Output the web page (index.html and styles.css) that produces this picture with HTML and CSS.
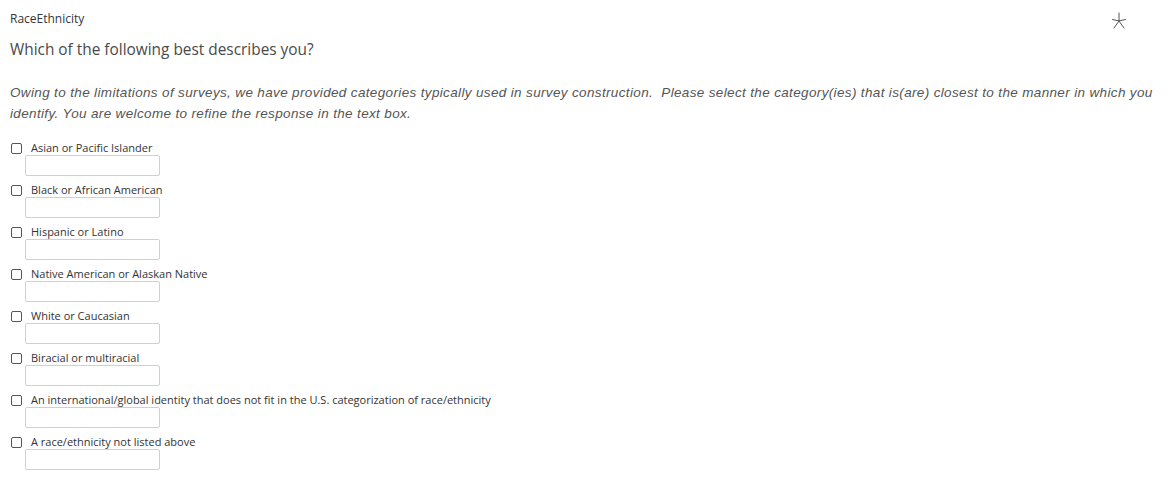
FILE: index.html
```html
<!DOCTYPE html>
<html>
<head>
<meta charset="utf-8">
<link rel="stylesheet" href="styles.css">
</head>
<body>
<div class="page">
  <div class="head">
    <div class="qname">RaceEthnicity</div>
    <svg class="req" width="16" height="18" viewBox="0 0 16 18"><g stroke="#555" stroke-width="1" fill="none" stroke-linecap="round"><line x1="8" y1="1" x2="8" y2="9"/><line x1="8" y1="9" x2="1.5" y2="7.5"/><line x1="8" y1="9" x2="14.5" y2="7.5"/><line x1="8" y1="9" x2="3" y2="16"/><line x1="8" y1="9" x2="13" y2="16"/></g></svg>
  </div>
  <div class="question">Which of the following best describes you?</div>
  <p class="intro">Owing to the limitations of surveys, we have provided categories typically used in survey construction.&nbsp; Please select the category(ies) that is(are) closest to the manner in which you identify. You are welcome to refine the response in the text box.</p>
  <div class="options">
    <div class="opt"><label class="row"><span class="box"></span><span class="lbl">Asian or Pacific Islander</span></label><span class="field"></span></div>
    <div class="opt"><label class="row"><span class="box"></span><span class="lbl">Black or African American</span></label><span class="field"></span></div>
    <div class="opt"><label class="row"><span class="box"></span><span class="lbl">Hispanic or Latino</span></label><span class="field"></span></div>
    <div class="opt"><label class="row"><span class="box"></span><span class="lbl">Native American or Alaskan Native</span></label><span class="field"></span></div>
    <div class="opt"><label class="row"><span class="box"></span><span class="lbl">White or Caucasian</span></label><span class="field"></span></div>
    <div class="opt"><label class="row"><span class="box"></span><span class="lbl">Biracial or multiracial</span></label><span class="field"></span></div>
    <div class="opt"><label class="row"><span class="box"></span><span class="lbl">An international/global identity that does not fit in the U.S. categorization of race/ethnicity</span></label><span class="field"></span></div>
    <div class="opt"><label class="row"><span class="box"></span><span class="lbl">A race/ethnicity not listed above</span></label><span class="field"></span></div>
  </div>
</div>
</body>
</html>
```
FILE: styles.css
```css
* { box-sizing: border-box; }
html, body { margin: 0; padding: 0; background: #fff; }
body { font-family: "Open Sans", "Noto Sans", sans-serif; color: #32363a; }
.page { padding: 10px 10px 0 10px; }
.head { display: flex; justify-content: space-between; align-items: flex-start; height: 24px; }
.qname { font-size: 12px; line-height: 18px; color: #32363a; }
.req { margin: 2px 37px 0 0; }
.question { font-size: 15.4px; line-height: 20px; color: #4a4a4a; margin-top: 6px; }
.intro { font-family: "Liberation Sans", Arial, sans-serif; font-style: italic; font-size: 13.5px; letter-spacing: 0.35px; line-height: 21px; color: #555; margin: 22px 0 0 0; }
.options { margin-top: 17px; display: flex; flex-direction: column; }
.opt { display: flex; flex-direction: column; height: 42px; }
.row { display: flex; align-items: center; height: 14px; }
.box { width: 11px; height: 11px; border: 1px solid #555; border-radius: 2px; margin: 0 9px 0 1px; background: #fff; }
.lbl { font-size: 11px; color: #333; line-height: 14px; }
.field { display: block; width: 135px; height: 21px; border: 1px solid #d0d0d0; border-radius: 2px; margin: 0 0 0 15px; background: #fff; }
```
